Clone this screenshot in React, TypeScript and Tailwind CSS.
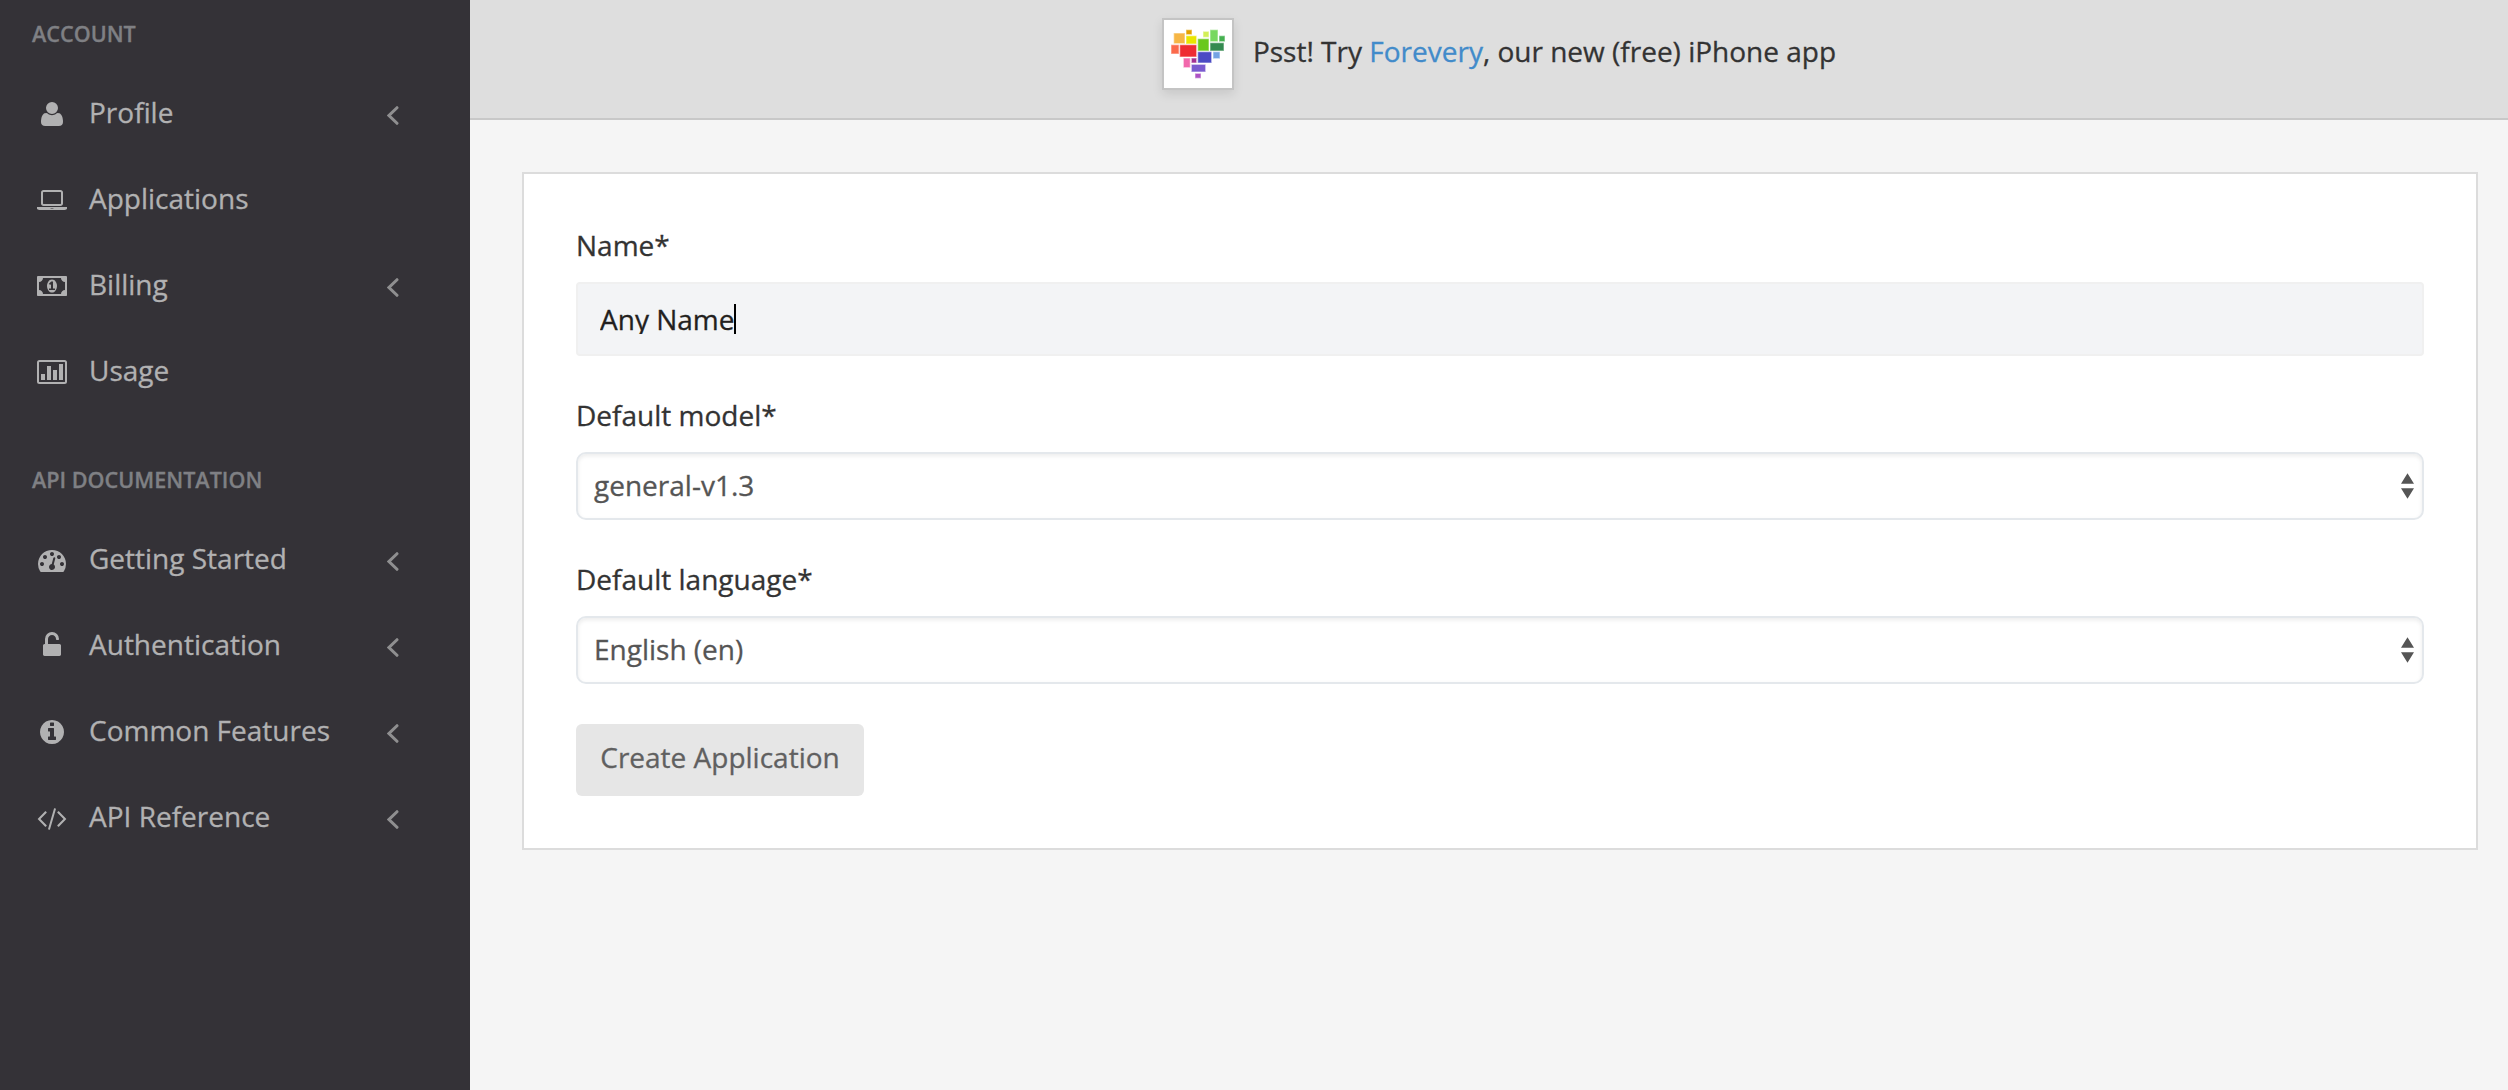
import React from 'react';

type IconDef = { box: string; size: string; path: string };

const icons: Record<string, IconDef> = {
  user: {
    box: '192 128 1408 1536',
    size: 'mt-[32px] h-[24px] w-[22px]',
    path: 'M1600 1405q0 120-73 189.5t-194 69.5h-874q-121 0-194-69.5t-73-189.5q0-53 3.5-103.5t14-109 26.5-108.5 43-97.5 62-81 85.5-53.5 111.5-20q9 0 42 21.5t74.5 48 108 48 133.5 21.5 133.5-21.5 108-48 74.5-48 42-21.5q61 0 111.5 20t85.5 53.5 62 81 43 97.5 26.5 108.5 14 109 3.5 103.5zm-320-893q0 159-112.5 271.5t-271.5 112.5-271.5-112.5-112.5-271.5 112.5-271.5 271.5-112.5 271.5 112.5 112.5 271.5z',
  },
  laptop: {
    box: '0 128 1920 1280',
    size: 'mt-[34px] h-[20px] w-[30px]',
    path: 'M416 1152q-66 0-113-47t-47-113v-704q0-66 47-113t113-47h1088q66 0 113 47t47 113v704q0 66-47 113t-113 47h-1088zm-32-864v704q0 13 9.5 22.5t22.5 9.5h1088q13 0 22.5-9.5t9.5-22.5v-704q0-13-9.5-22.5t-22.5-9.5h-1088q-13 0-22.5 9.5t-9.5 22.5zm1376 928h160v96q0 40-47 68t-113 28h-1600q-66 0-113-28t-47-68v-96h1760zm-720 96q16 0 16-16t-16-16h-160q-16 0-16 16t16 16h160z',
  },
  money: {
    box: '0 256 1920 1280',
    size: 'mt-[34px] h-[20px] w-[30px]',
    path: 'M768 1152h384v-96h-128v-448h-114l-148 137 77 80q42-37 55-57h2v288h-128v96zm512-256q0 70-21 142t-59.5 134-101.5 101-138 39-138-39-101.5-101-59.5-134-21-142 21-142 59.5-134 101.5-101 138-39 138 39 101.5 101 59.5 134 21 142zm512 256v-512q-106 0-181-75t-75-181h-1152q0 106-75 181t-181 75v512q106 0 181 75t75 181h1152q0-106 75-181t181-75zm128-832v1152q0 26-19 45t-45 19h-1792q-26 0-45-19t-19-45v-1152q0-26 19-45t45-19h1792q26 0 45 19t19 45z',
  },
  chart: {
    box: '0 0 30 24',
    size: 'mt-[32px] h-[24px] w-[30px]',
    path: 'M2.5 0h25a2.5 2.5 0 0 1 2.5 2.5v19a2.5 2.5 0 0 1-2.5 2.5h-25a2.5 2.5 0 0 1-2.5-2.5v-19a2.5 2.5 0 0 1 2.5-2.5zM2.5 2a.5.5 0 0 0-.5.5v19a.5.5 0 0 0 .5.5h25a.5.5 0 0 0 .5-.5v-19a.5.5 0 0 0-.5-.5zM4 14h4v6h-4zM10 6h4v14h-4zM16 10h4v10h-4zM22 4h4v16h-4z',
  },
  gauge: {
    box: '0 256 1792 1408',
    size: 'mt-[34px] h-[22px] w-[28px]',
    path: 'M384 1152q0-53-37.5-90.5t-90.5-37.5-90.5 37.5-37.5 90.5 37.5 90.5 90.5 37.5 90.5-37.5 37.5-90.5zm192-448q0-53-37.5-90.5t-90.5-37.5-90.5 37.5-37.5 90.5 37.5 90.5 90.5 37.5 90.5-37.5 37.5-90.5zm428 481l101-382q6-26-7.5-48.5t-38.5-29.5-48 6.5-30 39.5l-101 382q-60 5-107 43.5t-63 98.5q-20 77 20 146t117 89 146-20 89-117q16-60-6-117t-72-91zm660-33q0-53-37.5-90.5t-90.5-37.5-90.5 37.5-37.5 90.5 37.5 90.5 90.5 37.5 90.5-37.5 37.5-90.5zm-640-640q0-53-37.5-90.5t-90.5-37.5-90.5 37.5-37.5 90.5 37.5 90.5 90.5 37.5 90.5-37.5 37.5-90.5zm448 192q0-53-37.5-90.5t-90.5-37.5-90.5 37.5-37.5 90.5 37.5 90.5 90.5 37.5 90.5-37.5 37.5-90.5zm320 448q0 261-141 483-19 29-54 29h-1402q-35 0-54-29-141-221-141-483 0-182 71-348t191-286 286-191 348-71 348 71 286 191 191 286 71 348z',
  },
  unlock: {
    box: '320 0 1152 1536',
    size: 'mt-[30px] h-[24px] w-[18px]',
    path: 'M1376 768q40 0 68 28t28 68v576q0 40-28 68t-68 28h-960q-40 0-68-28t-28-68v-576q0-40 28-68t68-28h32v-320q0-185 131.500-316.500t316.500-131.500 316.500 131.500 131.500 316.500q0 26-19 45t-45 19h-64q-26 0-45-19t-19-45q0-106-75-181t-181-75-181 75-75 181v320h736z',
  },
  info: {
    box: '128 128 1536 1536',
    size: 'mt-[32px] h-[24px] w-[24px]',
    path: 'M1152 1376v-160q0-14-9-23t-23-9h-96v-512q0-14-9-23t-23-9h-320q-14 0-23 9t-9 23v160q0 14 9 23t23 9h96v320h-96q-14 0-23 9t-9 23v160q0 14 9 23t23 9h448q14 0 23-9t9-23zm-128-896v-160q0-14-9-23t-23-9h-192q-14 0-23 9t-9 23v160q0 14 9 23t23 9h192q14 0 23-9t9-23zm640 416q0 209-103 385.500t-279.500 279.500-385.500 103-385.500-103-279.500-279.500-103-385.500 103-385.500 279.500-279.500 385.500-103 385.500 103 279.500 279.500 103 385.500z',
  },
  code: {
    box: '-64 256 1920 1408',
    size: 'mt-[34px] h-[22px] w-[30px]',
    path: 'M553 1399l-50 50q-10 10-23 10t-23-10l-466-466q-10-10-10-23t10-23l466-466q10-10 23-10t23 10l50 50q10 10 10 23t-10 23l-393 393 393 393q10 10 10 23t-10 23zm591-1067l-373 1291q-4 13-15.500 19.500t-23.500 2.500l-62-17q-13-4-19.500-15.500t-2.500-24.500l373-1291q4-13 15.500-19.500t23.500-2.500l62 17q13 4 19.500 15.500t2.500 24.500zm657 651l-466 466q-10 10-23 10t-23-10l-50-50q-10-10-10-23t10-23l393-393-393-393q-10-10-10-23t10-23l50-50q10-10 23-10t23 10l466 466q10 10 10 23t-10 23z',
  },
};

type Item = { icon: string; label: string; expandable?: boolean };

const account: Item[] = [
  { icon: 'user', label: 'Profile', expandable: true },
  { icon: 'laptop', label: 'Applications' },
  { icon: 'money', label: 'Billing', expandable: true },
  { icon: 'chart', label: 'Usage' },
];

const docs: Item[] = [
  { icon: 'gauge', label: 'Getting Started', expandable: true },
  { icon: 'unlock', label: 'Authentication', expandable: true },
  { icon: 'info', label: 'Common Features', expandable: true },
  { icon: 'code', label: 'API Reference', expandable: true },
];

function NavItem({ icon, label, expandable }: Item) {
  const def = icons[icon];
  return (
    <li className="flex h-[86px] items-start pr-[71px] pl-[37px]">
      <span className="flex w-[30px] shrink-0 justify-center">
        <svg viewBox={def.box} className={def.size} fill="currentColor" fillRule={icon === 'chart' ? 'evenodd' : 'nonzero'}>
          <path d={def.path} />
        </svg>
      </span>
      <a className="ml-[22px] grow whitespace-nowrap leading-[84px]">{label}</a>
      {expandable && (
        <svg viewBox="0 0 12 20" className="mt-[36px] h-[20px] w-[12px] shrink-0 text-[#8f8f90]" fill="none" stroke="currentColor" strokeWidth="3" strokeLinecap="round">
          <path d="M10 1.700L2 9.500L10 17.300" />
        </svg>
      )}
    </li>
  );
}

function NavSection({ title, items }: { title: string; items: Item[] }) {
  return (
    <section>
      <h2 className="flex h-[70px] items-start pl-[32px] text-[21.6px] leading-[67px] font-semibold text-[#7f8084]">{title}</h2>
      <ul>
        {items.map((item) => (
          <NavItem key={item.label} {...item} />
        ))}
      </ul>
    </section>
  );
}

const tiles: [number, number, number, number, string][] = [
  [138, 89, 18, 15, '#e3a000'],
  [101, 99, 34, 32, '#f6b645'],
  [138, 107, 32, 25, '#e9e600'],
  [189, 94, 18, 18, '#d3ef58'],
  [210, 89, 24, 36, '#78d860'],
  [237, 107, 18, 18, '#45b050'],
  [93, 134, 24, 28, '#fb6a4c'],
  [119, 134, 51, 37, '#ee2b33'],
  [173, 116, 34, 37, '#69c81d'],
  [210, 128, 42, 25, '#348a50'],
  [173, 155, 42, 34, '#4b4bc4'],
  [219, 155, 21, 21, '#74a3e3'],
  [130, 174, 21, 29, '#f268ac'],
  [154, 174, 16, 15, '#a33194'],
  [154, 193, 43, 23, '#7a5bcf'],
  [165, 220, 18, 15, '#ad52c4'],
];

function HeartLogo() {
  return (
    <svg viewBox="72 60 204 204" className="size-[68px]">
      {tiles.map(([x, y, w, h, color]) => (
        <g key={`${x}-${y}`} fill={color}>
          <rect x={x} y={y} width={w} height={h} opacity={0.55} />
          <rect x={x + 2} y={y + 2} width={w - 4} height={h - 4} />
        </g>
      ))}
    </svg>
  );
}

function SelectBox({ value }: { value: string }) {
  return (
    <div className="flex h-[68px] items-start justify-between rounded-[10px] border-2 border-[#e4e8ec] bg-white pr-[8px] pl-[16px] text-[#555] shadow-[inset_0_2px_4px_rgba(0,0,0,0.08)]">
      <span className="leading-[62px]">{value}</span>
      <svg viewBox="0 0 13 26" className="mt-[19px] h-[26px] w-[13px]" fill="#555">
        <path d="M6.500 0.300L13 10.700H0zM0 15.300H13L6.500 25.700z" />
      </svg>
    </div>
  );
}

export default function App() {
  return (
    <div className="flex h-[1090px] w-[2508px] overflow-hidden bg-[#f5f5f5] font-['Open_Sans',sans-serif] text-[28px] text-[#333] [-webkit-text-stroke:0.3px]">
      <aside className="flex w-[470px] shrink-0 flex-col gap-[32px] bg-[#343237] text-[#b1b1b2]">
        <NavSection title="ACCOUNT" items={account} />
        <NavSection title="API DOCUMENTATION" items={docs} />
      </aside>

      <main className="flex grow flex-col">
        <header className="flex h-[120px] items-start justify-center border-b-2 border-[#c8c8c8] bg-[#dedede] pt-[18px] pl-[20px]">
          <div className="size-[72px] shrink-0 border-2 border-[#c4c4c4] bg-white shadow-[0_4px_10px_rgba(0,0,0,0.1)]">
            <HeartLogo />
          </div>
          <p className="ml-[19px] whitespace-nowrap leading-[66px]">
            Psst! Try <a className="text-[#428bca]">Forevery</a>, our new (free) iPhone app
          </p>
        </header>

        <form className="mt-[52px] mr-[30px] ml-[52px] flex h-[678px] flex-col items-stretch border-2 border-[#dcdcdc] bg-white px-[52px] pt-[50px]">
          <label className="block h-[58px] leading-[42px]">Name*</label>
          <div className="flex h-[74px] items-center rounded-[4px] border-2 border-[#f0f0f0] bg-[#f3f4f6] px-[22px] text-[#231f20]">
            <span className="h-[30px] overflow-hidden whitespace-nowrap leading-[30px]">Any Name</span>
            <span className="h-[30px] w-[2px] bg-black" />
          </div>

          <label className="mt-[38px] block h-[58px] leading-[42px]">Default model*</label>
          <SelectBox value="general-v1.3" />

          <label className="mt-[38px] block h-[58px] leading-[42px]">Default language*</label>
          <SelectBox value="English (en)" />

          <button type="button" className="mt-[40px] flex h-[72px] w-[288px] items-start justify-center rounded-[6px] bg-[#e6e6e6] leading-[67px] text-[#606060]">
            Create Application
          </button>
        </form>
      </main>
    </div>
  );
}
